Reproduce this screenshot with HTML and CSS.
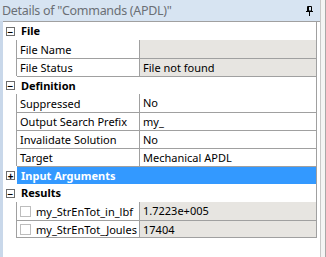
FILE: index.html
```html
<!DOCTYPE html>
<html lang="en">
<head>
    <meta charset="UTF-8">
    <title>Details of "Commands (APDL)"</title>
    <link rel="stylesheet" href="styles.css">
</head>
<body>
    <div class="window">
        <div class="panel">
            <div class="titlebar">
                <span class="title">Details of "Commands (APDL)"</span>
                <svg class="pin" width="7" height="10" viewBox="0 0 7 10">
                    <path d="M1.5 0.5h4v4.5h-4z M2.5 0.5v4.5" fill="none" stroke="#000" stroke-width="1"/>
                    <path d="M0 5.5h7 M3.5 5.5v4.5" fill="none" stroke="#000" stroke-width="1"/>
                </svg>
            </div>
            <div class="grid">
                <div class="row group">
                    <span class="toggle">&minus;</span>
                    <div class="head">File</div>
                </div>
                <div class="row">
                    <span class="gutter"></span>
                    <div class="name">File Name</div>
                    <div class="value readonly"></div>
                </div>
                <div class="row">
                    <span class="gutter"></span>
                    <div class="name">File Status</div>
                    <div class="value readonly">File not found</div>
                </div>

                <div class="row group">
                    <span class="toggle">&minus;</span>
                    <div class="head">Definition</div>
                </div>
                <div class="row">
                    <span class="gutter"></span>
                    <div class="name">Suppressed</div>
                    <div class="value">No</div>
                </div>
                <div class="row">
                    <span class="gutter"></span>
                    <div class="name">Output Search Prefix</div>
                    <div class="value">my_</div>
                </div>
                <div class="row">
                    <span class="gutter"></span>
                    <div class="name">Invalidate Solution</div>
                    <div class="value">No</div>
                </div>
                <div class="row">
                    <span class="gutter"></span>
                    <div class="name">Target</div>
                    <div class="value">Mechanical APDL</div>
                </div>

                <div class="row group selected">
                    <span class="toggle">+</span>
                    <div class="head">Input Arguments</div>
                </div>

                <div class="row group">
                    <span class="toggle">&minus;</span>
                    <div class="head">Results</div>
                </div>
                <div class="row">
                    <span class="gutter"></span>
                    <div class="name"><span class="check"></span>my_StrEnTot_in_lbf</div>
                    <div class="value readonly">1.7223e+005</div>
                </div>
                <div class="row last">
                    <span class="gutter"></span>
                    <div class="name"><span class="check"></span>my_StrEnTot_Joules</div>
                    <div class="value readonly">17404</div>
                </div>
            </div>
        </div>
        <div class="edge"></div>
    </div>
</body>
</html>
```

FILE: styles.css
```css
body {
    margin: 0;
    background-color: white;
    font-family: 'Noto Sans', 'Open Sans', sans-serif;
}
.window {
    display: flex;
    width: 326px;
    height: 257px;
}
.panel {
    width: 322px;
    display: flex;
    flex-direction: column;
    background-color: #c9d8ea;
}
.titlebar {
    height: 21px;
    display: flex;
    align-items: center;
    justify-content: space-between;
    padding: 0 7px 0 2px;
    background-color: #d7e4f2;
}
.title {
    color: #6b6f75;
    font-size: 12.5px;
    letter-spacing: -0.3px;
    white-space: nowrap;
}
.pin {
    display: block;
    margin-top: 1px;
}
.grid {
    flex: 1;
    margin-left: 3px;
    background-color: white;
    border-top: 1px solid #a0a0a0;
}
.row {
    display: grid;
    grid-template-columns: 14px 123px 1fr;
    height: 18px;
    font-size: 11px;
    color: #000;
}
.row.group {
    grid-template-columns: 14px 1fr;
}
.row + .row > .name,
.row + .row > .value,
.row + .row > .head {
    border-top: 1px solid #a0a0a0;
}
.row.group + .row > .name,
.row.group + .row > .value,
.row.group + .row > .head {
    border-top: none;
    height: 18px;
}
.gutter {
    border-right: 1px solid #a0a0a0;
}
.toggle {
    display: flex;
    align-items: center;
    justify-content: center;
    box-sizing: border-box;
    width: 9px;
    height: 9px;
    margin: 5px 0 0 3px;
    border: 1px solid #6d6d6d;
    background-color: white;
    font-size: 10px;
    line-height: 1;
    font-weight: bold;
}
.head {
    padding-left: 4px;
    font-weight: bold;
    line-height: 17px;
    border-right: 1px solid #a0a0a0;
    margin-right: 3px;
}
.name, .value {
    line-height: 17px;
    padding-left: 3px;
    white-space: nowrap;
    overflow: hidden;
}
.name {
    display: flex;
    align-items: center;
    border-right: 1px solid #a0a0a0;
}
.value {
    border-right: 1px solid #a0a0a0;
    margin-right: 3px;
}
.readonly {
    background-color: #e7e5e1;
}
.selected .head {
    background-color: #3399ff;
    color: white;
}
.last .name,
.last .value {
    border-bottom: 1px solid #a0a0a0;
}
.check {
    width: 9px;
    height: 9px;
    border: 1px solid #bdbdbd;
    margin-right: 5px;
    flex-shrink: 0;
}
.edge {
    width: 4px;
    border-left: 1px solid #c8c8c8;
    border-right: 1px solid #a8a8a8;
    background-color: #f4f4f4;
}
```
